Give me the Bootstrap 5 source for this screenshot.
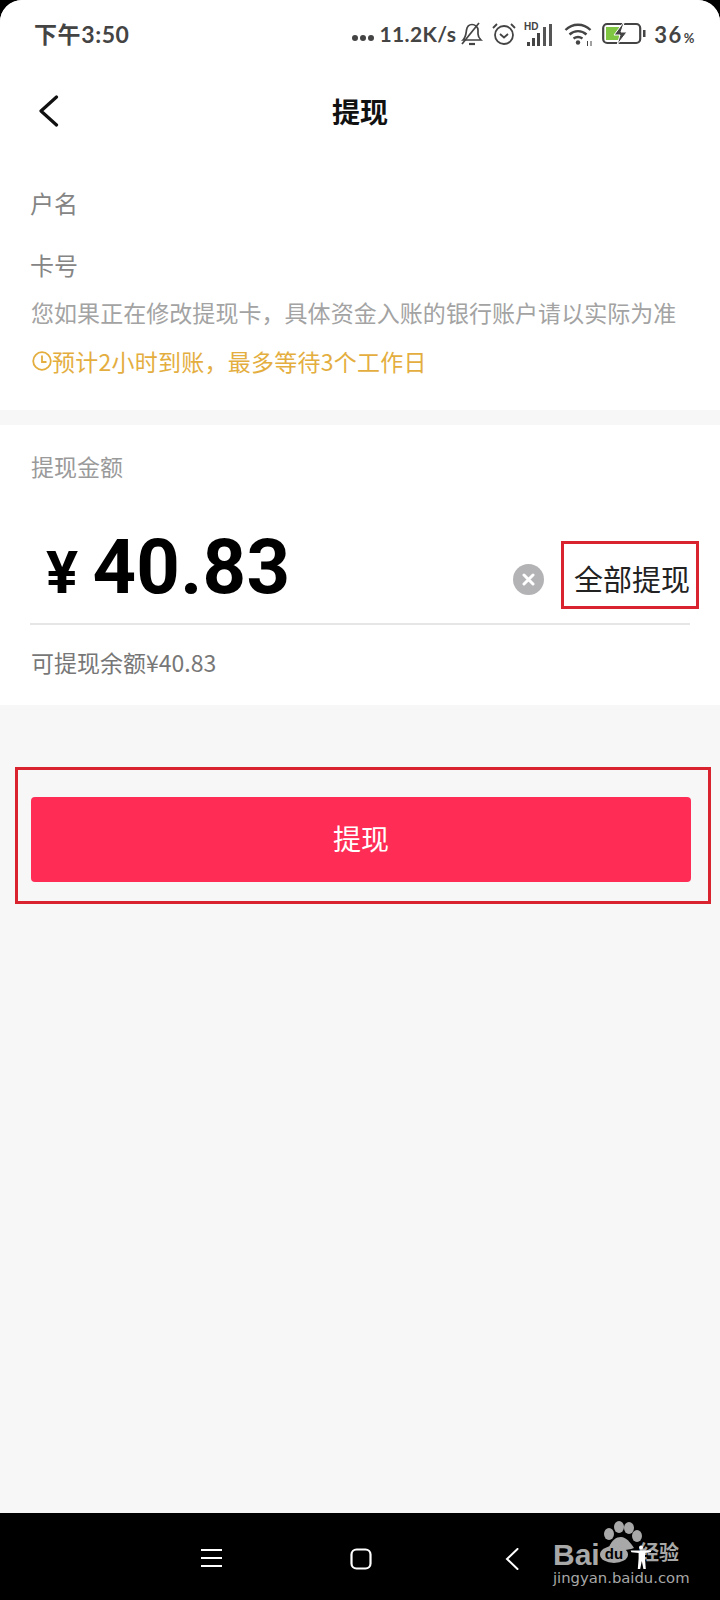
<!DOCTYPE html>
<html lang="zh-CN">
<head>
  <meta charset="UTF-8">
  <title>提现</title>
  <meta name="viewport" content="width=device-width, initial-scale=1">
  <link href="https://cdn.jsdelivr.net/npm/bootstrap@5.3.3/dist/css/bootstrap.min.css" rel="stylesheet">
  <style>
    html, body { height: 1600px; overflow: hidden; background: #000; }
    body { font-family: "Noto Sans CJK SC", "Liberation Sans", sans-serif; color: #111; }
    .phone { height: 1600px; width: 720px; position: relative; }
    .screen { height: 1513px; background: #f7f7f8; border-radius: 22px 22px 0 0; overflow: hidden; }

    .status-bar { height: 68px; padding: 0 24px 0 34px; color: #444; font-family: Lato, "Noto Sans CJK SC", sans-serif; font-weight: 700; }
    .status-time { font-size: 23px; letter-spacing: .6px; }
    .status-time b { font-family: "Noto Sans CJK SC", sans-serif; font-weight: 700; }
    .status-speed { font-size: 21px; letter-spacing: .4px; }
    .status-pct { font-size: 22px; letter-spacing: 1.500px; }
    .status-pct small { font-size: 13px; margin-left: 1px; }

    .top-nav { height: 88px; position: relative; }
    .top-nav h1 { font-size: 28px; font-weight: 700; margin: 0; color: #111; }
    .back-btn { position: absolute; left: 38px; top: 27px; line-height: 0; }

    .info-block { background: #fff; padding: 30px 30px 0; height: 254px; }
    .info-label { font-size: 24px; color: #858585; line-height: 34px; }
    .info-label + .info-label { margin-top: 28px; }
    .info-hint { font-size: 23px; line-height: 32px; color: #a3a3a3; white-space: nowrap; margin: 14px 0 0 1px; letter-spacing: .05px; }
    .info-eta { font-size: 23px; line-height: 32px; color: #e4ae3f; margin: 17px 0 0 2px; letter-spacing: .25px; }

    .amount-block { background: #fff; margin-top: 15px; height: 280px; padding: 0 30px; }
    .amount-label { font-size: 23px; color: #9a9a9a; line-height: 32px; padding-top: 25px; height: 57px; box-sizing: content-box; margin-left: 1px; }
    .amount-row { height: 118px; border-bottom: 2px solid #e6e6e6; }
    .amount-value { font-family: Roboto, sans-serif; font-weight: 700; font-size: 76px; color: #000; line-height: 1; margin: 4px 0 0 16px; letter-spacing: .3px; }
    .amount-value .cur { font-size: 60px; margin-right: 14px; }
    .clear-btn { width: 31px; height: 31px; border-radius: 50%; background: #b3b3b6; margin: 28px 17px 0 0; }
    .withdraw-all { border: 3px solid #d9232e; width: 138px; height: 68px; margin: 20px -9px 0 0; font-size: 29px; color: #222; background: #fff; padding: 7px 0 0 10px; line-height: 1; text-align: left; border-radius: 0; white-space: nowrap; }
    .balance-text { font-size: 23px; color: #777; line-height: 32px; margin: 21px 0 0 1px; }

    .submit-frame { margin: 62px 9px 0 15px; border: 3px solid #d9232e; padding: 27px 17px 20px 13px; height: 137px; }
    .submit-btn { background: #ff2d55; border: 0; border-radius: 4px; color: #fff; height: 85px; font-size: 28px; padding-bottom: 10px; --bs-btn-hover-bg: #ff2d55; --bs-btn-hover-color: #fff; }

    .bottom-nav { height: 87px; position: relative; }
    .nav-icon { position: absolute; top: 35px; line-height: 0; }
    .nav-menu { left: 201px; }
    .nav-home { left: 350px; }
    .nav-back { left: 505px; }

    .bd-mark { position: absolute; left: 553px; top: 8px; width: 130px; height: 74px; color: #a8a8a8; }
    .bd-paw { position: absolute; left: 42px; top: 0; }
    .bd-fig { position: absolute; left: 75px; top: 24px; }
    .bd-word { position: absolute; left: 0; top: 19px; font-family: "Liberation Sans", sans-serif; font-weight: 700; font-size: 30px; line-height: 1; }
    .bd-du { position: absolute; left: 47px; top: 25px; width: 28px; height: 17px; border-radius: 50%; background: #a8a8a8; color: #000; font-family: "Liberation Sans", sans-serif; font-size: 15px; font-weight: 700; line-height: 16px; text-align: center; }
    .bd-jy { position: absolute; left: 86px; top: 21px; font-size: 20px; font-weight: 700; line-height: 1; white-space: nowrap; }
    .bd-url { position: absolute; left: 0; top: 50px; font-family: "DejaVu Sans", sans-serif; font-size: 14.800px; line-height: 1; white-space: nowrap; }
  </style>
</head>
<body>

  <div class="phone">
    <div class="screen">

      <div class="bg-white">
        <!-- status bar -->
        <div class="status-bar d-flex align-items-center justify-content-between">
          <div class="status-time"><b>下午</b>3:50</div>
          <div class="d-flex align-items-center">
            <svg width="24" height="8" viewBox="0 0 24 8" class="me-1 mt-2"><g fill="#444"><circle cx="4" cy="4" r="3"/><circle cx="12" cy="4" r="3"/><circle cx="20" cy="4" r="3"/></g></svg>
            <span class="status-speed">11.2K/s</span>
            <svg width="24" height="26" viewBox="0 0 24 26" class="ms-1" fill="none" stroke="#444" stroke-width="1.7"><path d="M3 19h18c-2-2-3-3-3-6V9c0-3-3-5.500-6-5.500S7 6 6.500 9c-.5 3-.5 7-3.500 10z"/><path d="M9 23h6" stroke-width="2.200"/><path d="M19 2 2 23"/></svg>
            <svg width="24" height="26" viewBox="1 0 24 26" class="ms-2" fill="none" stroke="#444" stroke-width="1.800"><circle cx="13" cy="14" r="9"/><path d="M9 13l4 3.500 4-3.500M2 7l4-4M24 7l-4-4"/></svg>
            <svg width="32" height="26" viewBox="0 0 32 26" class="ms-2" fill="#444"><text x="0" y="9" font-family="Liberation Sans" font-size="10" font-weight="700">HD</text><rect x="3" y="21" width="3" height="4"/><rect x="8" y="17" width="3" height="8"/><rect x="13" y="12" width="3" height="13"/><rect x="19" y="6" width="3" height="19" fill="#555"/><rect x="25" y="3" width="3" height="22" fill="#555"/></svg>
            <svg width="30" height="26" viewBox="0 0 30 26" class="ms-2" fill="none" stroke="#444" stroke-width="2.400"><path d="M1.500 9c7-7 18-7 25 0M5.500 13.500c5-4.500 12-4.500 17 0M9.500 17.500c3-2 6-2 9 0"/><circle cx="14" cy="21.500" r="2.200" fill="#444" stroke="none"/><path d="M23.500 20v5M27 20v5" stroke-width="1"/></svg>
            <svg width="44" height="24" viewBox="0 0 44 24" class="ms-2"><rect x="1.200" y="2" width="37" height="19" rx="4" fill="none" stroke="#444" stroke-width="2.200"/><rect x="4" y="5" width="13" height="13" fill="#7fc742"/><path d="M21 1 12 13h6l-3 10 10-13h-6l3-9z" fill="#444" stroke="#fff" stroke-width="1"/><rect x="41" y="8" width="2.500" height="7" fill="#444"/></svg>
            <span class="status-pct ms-2">36<small>%</small></span>
          </div>
        </div>

        <!-- title -->
        <div class="top-nav d-flex align-items-center justify-content-center">
          <a class="back-btn" href="#"><svg width="21" height="32" viewBox="0 0 21 32" fill="none" stroke="#111" stroke-width="3.200" stroke-linecap="round" stroke-linejoin="round"><path d="M18.500 2 3 16l15.500 14"/></svg></a>
          <h1>提现</h1>
        </div>
      </div>

      <div class="info-block">
        <div class="info-label">户名</div>
        <div class="info-label">卡号</div>
        <div class="info-hint">您如果正在修改提现卡，具体资金入账的银行账户请以实际为准</div>
        <div class="info-eta d-flex align-items-center">
          <svg width="20" height="20" viewBox="0 0 20 20" fill="none" stroke="#e4ae3f" stroke-width="1.800"><circle cx="10" cy="10" r="8.800"/><path d="M10 4.500V11h4.500"/></svg>
          <span>预计2小时到账，最多等待3个工作日</span>
        </div>
      </div>

      <div class="amount-block">
        <div class="amount-label">提现金额</div>
        <div class="amount-row d-flex align-items-center">
          <div class="amount-value flex-grow-1"><span class="cur">¥</span>40.83</div>
          <div class="clear-btn d-flex align-items-center justify-content-center">
            <svg width="13" height="13" viewBox="0 0 13 13" stroke="#fff" stroke-width="3" stroke-linecap="round"><path d="M2 2l9 9M11 2l-9 9"/></svg>
          </div>
          <button class="btn withdraw-all" type="button">全部提现</button>
        </div>
        <div class="balance-text">可提现余额¥40.83</div>
      </div>

      <div class="submit-frame">
        <button class="btn submit-btn w-100" type="button">提现</button>
      </div>
    </div>

    <div class="bottom-nav">
      <div class="nav-icon nav-menu"><svg width="22" height="20" viewBox="0 0 22 20" stroke="#fff" stroke-width="2"><path d="M0 2h21M0 10h21M0 18h21"/></svg></div>
      <div class="nav-icon nav-home"><svg width="22" height="22" viewBox="0 0 22 22" fill="none" stroke="#fff" stroke-width="2.200"><rect x="1.500" y="1.500" width="19" height="19" rx="5"/></svg></div>
      <div class="nav-icon nav-back"><svg width="14" height="22" viewBox="0 0 14 22" fill="none" stroke="#fff" stroke-width="2" stroke-linecap="round"><path d="M12.500 1 2 11l10.500 10"/></svg></div>

      <!-- watermark -->
      <div class="bd-mark">
        <svg width="50" height="40" viewBox="0 0 50 40" class="bd-paw" fill="#a8a8a8"><ellipse cx="14" cy="13" rx="5" ry="6"/><ellipse cx="24" cy="6" rx="5" ry="6"/><ellipse cx="34" cy="7" rx="5" ry="6"/><ellipse cx="42" cy="15" rx="5" ry="6"/><path d="M14 26c3-7 7-10 12-10s9 5 13 11c-8 3-17 3-25-1z"/></svg>
        <span class="bd-word">Bai</span>
        <span class="bd-du">du</span>
        <span class="bd-jy">经验</span>
        <span class="bd-url">jingyan.baidu.com</span>
        <svg width="26" height="24" viewBox="0 0 26 30" class="bd-fig" fill="#fff"><circle cx="13" cy="3" r="2.500"/><path d="M0 7h26l-1 2-7 1v7l1 13h-3l-2-10-2 10H9l1-13v-7L1 9z"/></svg>
      </div>
    </div>
  </div>

  <script src="https://cdn.jsdelivr.net/npm/bootstrap@5.3.3/dist/js/bootstrap.bundle.min.js"></script>
</body>
</html>
